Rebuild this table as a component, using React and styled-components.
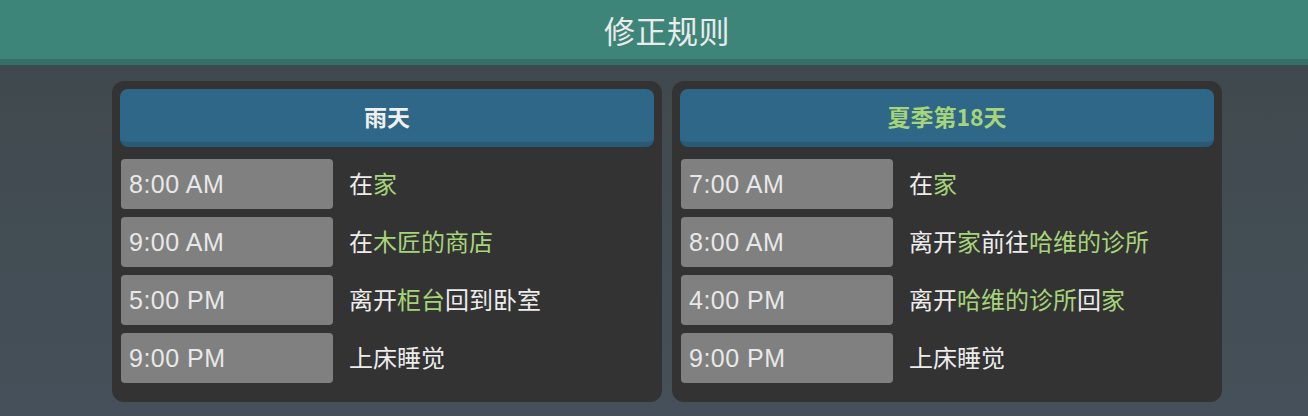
import styled, { createGlobalStyle } from "styled-components";

const GlobalStyle = createGlobalStyle`
  html, body {
    margin: 0;
    padding: 0;
  }
  body {
    font-family: "Liberation Sans", "Noto Sans CJK SC", sans-serif;
    background: #3f494c;
  }
`;

const days = [
  {
    title: "雨天",
    highlight: false,
    rows: [
      { time: "8:00 AM", parts: [["在"], ["家", true]] },
      { time: "9:00 AM", parts: [["在"], ["木匠的商店", true]] },
      { time: "5:00 PM", parts: [["离开"], ["柜台", true], ["回到卧室"]] },
      { time: "9:00 PM", parts: [["上床睡觉"]] },
    ],
  },
  {
    title: "夏季第18天",
    highlight: true,
    rows: [
      { time: "7:00 AM", parts: [["在"], ["家", true]] },
      { time: "8:00 AM", parts: [["离开"], ["家", true], ["前往"], ["哈维的诊所", true]] },
      { time: "4:00 PM", parts: [["离开"], ["哈维的诊所", true], ["回"], ["家", true]] },
      { time: "9:00 PM", parts: [["上床睡觉"]] },
    ],
  },
];

const App = () => (
  <Page>
    <GlobalStyle />
    <Header>
      <Title>修正规则</Title>
    </Header>
    <Columns>
      {days.map((day) => (
        <Panel key={day.title}>
          <DayBar>
            <DayTitle $highlight={day.highlight}>{day.title}</DayTitle>
          </DayBar>
          <Rows>
            {day.rows.map((row) => (
              <Row key={row.time}>
                <Time>{row.time}</Time>
                <Desc>
                  {row.parts.map(([text, place], i) =>
                    place ? <Place key={i}>{text}</Place> : <span key={i}>{text}</span>
                  )}
                </Desc>
              </Row>
            ))}
          </Rows>
        </Panel>
      ))}
    </Columns>
  </Page>
);

export default App;

const Page = styled.div`
  width: 1308px;
  height: 416px;
  background: linear-gradient(180deg, #3e484b 0%, #46505a 100%);
  overflow: hidden;
`;

const Header = styled.header`
  height: 65px;
  box-sizing: border-box;
  padding: 0 0 6px 26px;
  background: #3d8578;
  box-shadow: inset 0 -6px 0 #366f67;
  display: flex;
  align-items: center;
  justify-content: center;
`;

const Title = styled.h1`
  margin: 0;
  font-family: "Noto Sans CJK SC", sans-serif;
  font-weight: 400;
  font-size: 31px;
  color: #ebebeb;
  letter-spacing: 0.5px;
`;

const Columns = styled.main`
  display: flex;
  gap: 10px;
  padding: 16px 0 0 112px;
`;

const Panel = styled.section`
  width: 550px;
  height: 321px;
  box-sizing: border-box;
  background: #333333;
  border-radius: 12px;
  padding: 8px;
`;

const DayBar = styled.div`
  height: 53px;
  background: #2e6787;
  border-bottom: 5px solid #2a5a75;
  border-radius: 8px;
  display: flex;
  align-items: center;
  justify-content: center;
`;

const DayTitle = styled.h2`
  margin: 0;
  font-family: "Noto Sans CJK SC", sans-serif;
  font-weight: 700;
  font-size: 23px;
  color: ${({ $highlight }) => ($highlight ? "#a6d47a" : "#f0f0f0")};
`;

const Rows = styled.div`
  display: flex;
  flex-direction: column;
  gap: 8px;
  margin-top: 12px;
  padding-left: 1px;
`;

const Row = styled.div`
  display: flex;
  align-items: center;
  gap: 16px;
`;

const Time = styled.div`
  width: 212px;
  height: 50px;
  box-sizing: border-box;
  padding-left: 8px;
  background: #808080;
  border-radius: 4px;
  display: flex;
  align-items: center;
  font-family: "Liberation Sans", sans-serif;
  font-size: 25px;
  letter-spacing: 0.5px;
  color: #e8e8e8;
`;

const Desc = styled.div`
  font-family: "Noto Sans CJK SC", sans-serif;
  font-size: 24px;
  line-height: 1;
  padding-bottom: 3px;
  color: #ececec;
`;

const Place = styled.span`
  color: #a6d47a;
`;
